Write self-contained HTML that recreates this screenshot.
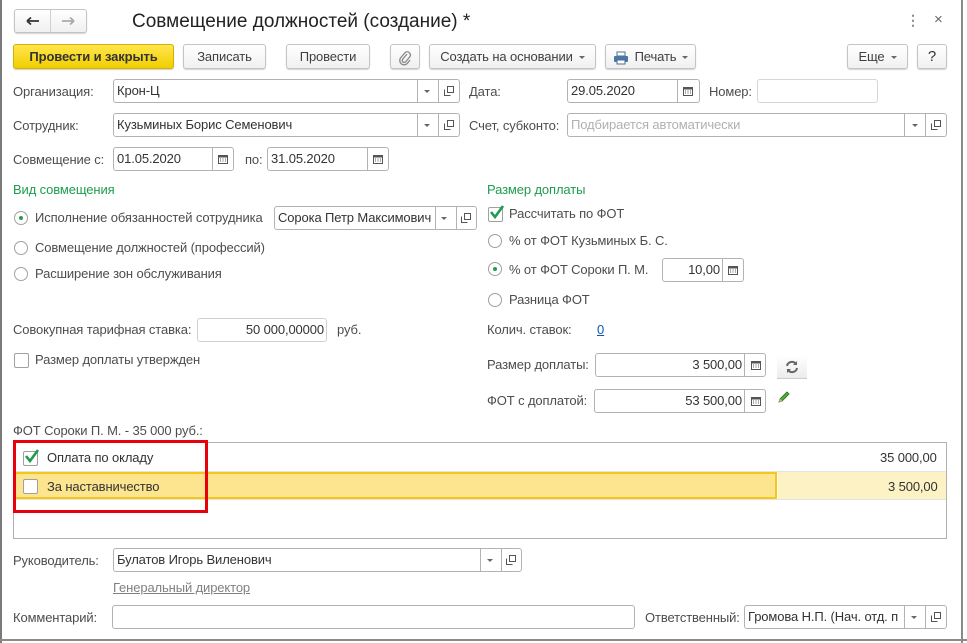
<!DOCTYPE html>
<html><head><meta charset="utf-8">
<style>
*{box-sizing:border-box;margin:0;padding:0}
body{width:967px;height:643px;background:#fff;font-family:"Liberation Sans",Arial,sans-serif;font-size:13px;letter-spacing:-0.12px;color:#4d4d4d;position:relative;overflow:hidden}
.a{position:absolute}
.t{position:absolute;line-height:16px;white-space:nowrap}
.v{color:#333}
.f{position:absolute;height:24px;border:1px solid #b3b3b3;border-radius:3px;background:#fff;line-height:22px;padding-left:3px;color:#333;white-space:nowrap;overflow:hidden}
.d{position:absolute;top:0;bottom:0;border-left:1px solid #b3b3b3}
.btn{position:absolute;height:25px;border:1px solid #c4c4c4;border-radius:3px;background:linear-gradient(#fff,#f0f0f0);box-shadow:0 1px 1px rgba(0,0,0,.18);text-align:center;line-height:23px;color:#404040;white-space:nowrap}
.arr{display:inline-block;width:0;height:0;border-left:3px solid transparent;border-right:3px solid transparent;border-top:3px solid #666;vertical-align:middle;margin-left:6px}
.rad{position:absolute;width:14px;height:14px;border:1px solid #a0a0a0;border-radius:50%;background:#fff}
.rad.on::after{content:"";position:absolute;left:4px;top:4px;width:4px;height:4px;border-radius:50%;background:#2b9a4a}
.cb{position:absolute;width:15px;height:15px;border:1px solid #a0a0a0;border-radius:2px;background:#fff}
.g{color:#1e9c4e}
</style></head><body>
<div class="a" style="left:0;top:0;width:2px;height:643px;background:#7a7a7a"></div>
<div class="a" style="left:961px;top:0;width:2px;height:643px;background:#8a8a8a"></div>
<div class="a" style="left:0;top:639px;width:967px;height:2px;background:#8a8a8a"></div>

<!-- nav -->
<div class="btn" style="left:14px;top:9px;width:73px;height:24px;line-height:20px"></div>
<div class="a" style="left:50px;top:10px;width:1px;height:22px;background:#d0d0d0"></div>
<svg class="a" style="left:26px;top:16px" width="14" height="10"><path d="M1 5H13M1 5L5 1.5M1 5L5 8.5" stroke="#333" stroke-width="1.8" fill="none"/></svg>
<svg class="a" style="left:61px;top:16px" width="14" height="10"><path d="M1 5H13M13 5L9 1.5M13 5L9 8.5" stroke="#aaa" stroke-width="1.8" fill="none"/></svg>
<div class="t" style="left:132px;top:11px;font-size:19px;line-height:22px;color:#222;letter-spacing:0">Совмещение должностей (создание) *</div>
<div class="t" style="left:906px;top:12px;color:#888;font-size:14px;font-weight:bold">⋮</div>
<div class="t" style="left:934px;top:12px;color:#666;font-size:15px">×</div>

<!-- toolbar -->
<div class="btn" style="left:13px;top:44px;width:161px;background:linear-gradient(#ffe64d,#f2cf00);border-color:#d4b300;color:#333;font-weight:bold">Провести и закрыть</div>
<div class="btn" style="left:183px;top:44px;width:83px">Записать</div>
<div class="btn" style="left:286px;top:44px;width:84px">Провести</div>
<div class="btn" style="left:390px;top:44px;width:30px"><svg width="14" height="16" style="vertical-align:middle"><path d="M9 4L4.5 9.5a2 2 0 0 0 3 2.5L12 6.5a3.2 3.2 0 0 0-4.8-4L2.5 8a4.4 4.4 0 0 0 6.5 5.8L12 10" stroke="#888" stroke-width="1.3" fill="none"/></svg></div>
<div class="btn" style="left:429px;top:44px;width:167px">Создать на основании<span class="arr"></span></div>
<div class="btn" style="left:605px;top:44px;width:91px"><svg width="16" height="14" style="vertical-align:middle;margin-right:6px"><rect x="4" y="1" width="8" height="4" fill="#fff" stroke="#4b6f96"/><rect x="1" y="5" width="14" height="6" rx="1" fill="#4b76a6"/><rect x="4" y="9" width="8" height="4" fill="#fff" stroke="#4b6f96"/></svg>Печать<span class="arr"></span></div>
<div class="btn" style="left:847px;top:44px;width:61px">Еще<span class="arr"></span></div>
<div class="btn" style="left:917px;top:44px;width:30px;font-size:15px;color:#333">?</div>

<!-- row 1 -->
<div class="t" style="left:13px;top:84px">Организация:</div>
<div class="f" style="left:113px;top:79px;width:347px">Крон-Ц<div class="d" style="left:303px"></div><div class="d" style="left:324px"></div></div>
<div class="t" style="left:469px;top:84px">Дата:</div>
<div class="f" style="left:567px;top:79px;width:133px">29.05.2020<div class="d" style="left:109px"></div></div>
<div class="t" style="left:709px;top:84px">Номер:</div>
<div class="f" style="left:757px;top:79px;width:121px;border-color:#d6d6d6"></div>

<!-- row 2 -->
<div class="t" style="left:13px;top:118px">Сотрудник:</div>
<div class="f" style="left:113px;top:113px;width:347px">Кузьминых Борис Семенович<div class="d" style="left:303px"></div><div class="d" style="left:324px"></div></div>
<div class="t" style="left:469px;top:118px">Счет, субконто:</div>
<div class="f" style="left:567px;top:113px;width:380px;color:#b0b0b0">Подбирается автоматически<div class="d" style="left:336px"></div><div class="d" style="left:357px"></div></div>

<!-- row 3 -->
<div class="t" style="left:13px;top:152px">Совмещение с:</div>
<div class="f" style="left:113px;top:147px;width:121px">01.05.2020<div class="d" style="left:98px"></div></div>
<div class="t" style="left:245px;top:152px">по:</div>
<div class="f" style="left:267px;top:147px;width:122px">31.05.2020<div class="d" style="left:99px"></div></div>

<!-- left group -->
<div class="t g" style="left:13px;top:182px">Вид совмещения</div>
<div class="rad on" style="left:14px;top:211px"></div>
<div class="t" style="left:35px;top:210px">Исполнение обязанностей сотрудника</div>
<div class="f" style="left:274px;top:206px;width:203px">Сорока Петр Максимович<div class="d" style="left:160px"></div><div class="d" style="left:181px"></div></div>
<div class="rad" style="left:14px;top:241px"></div>
<div class="t" style="left:35px;top:240px">Совмещение должностей (профессий)</div>
<div class="rad" style="left:14px;top:267px"></div>
<div class="t" style="left:35px;top:266px">Расширение зон обслуживания</div>

<div class="t" style="left:13px;top:322px">Совокупная тарифная ставка:</div>
<div class="f" style="left:197px;top:318px;width:130px;text-align:right;padding-right:2px;border-color:#d0d0d0">50 000,00000</div>
<div class="t" style="left:337px;top:322px">руб.</div>
<div class="cb" style="left:14px;top:353px"></div>
<div class="t" style="left:35px;top:352px">Размер доплаты утвержден</div>

<!-- right group -->
<div class="t g" style="left:487px;top:182px">Размер доплаты</div>
<div class="cb" style="left:488px;top:207px"></div>
<svg class="a" style="left:489px;top:204px" width="16" height="16"><path d="M2 8L6 13L14 2" stroke="#1e9c4e" stroke-width="2.6" fill="none"/></svg>
<div class="t" style="left:509px;top:206px">Рассчитать по ФОТ</div>
<div class="rad" style="left:488px;top:234px"></div>
<div class="t" style="left:509px;top:233px">% от ФОТ Кузьминых Б. С.</div>
<div class="rad on" style="left:488px;top:262px"></div>
<div class="t" style="left:509px;top:262px">% от ФОТ Сороки П. М.</div>
<div class="f" style="left:662px;top:258px;width:82px;text-align:right;padding-right:23px">10,00<div class="d" style="left:59px"></div></div>
<div class="rad" style="left:488px;top:293px"></div>
<div class="t" style="left:509px;top:292px">Разница ФОТ</div>
<div class="t" style="left:487px;top:322px">Колич. ставок:</div>
<div class="t" style="left:597px;top:322px;color:#0b56b8;text-decoration:underline">0</div>
<div class="t" style="left:487px;top:357px">Размер доплаты:</div>
<div class="f" style="left:595px;top:353px;width:171px;text-align:right;padding-right:23px">3 500,00<div class="d" style="left:148px"></div></div>
<div class="a" style="left:777px;top:355px;width:30px;height:24px;background:linear-gradient(#fff,#ececec);border-bottom:1px solid #ccc"></div>
<svg class="a" style="left:785px;top:360px" width="14" height="14"><path d="M2 6a5 5 0 0 1 9-2M12 8a5 5 0 0 1-9 2" stroke="#666" stroke-width="2" fill="none"/><path d="M12 1v4h-4zM2 13v-4h4z" fill="#666"/></svg>
<div class="t" style="left:487px;top:393px">ФОТ с доплатой:</div>
<div class="f" style="left:594px;top:389px;width:172px;text-align:right;padding-right:23px">53 500,00<div class="d" style="left:149px"></div></div>
<svg class="a" style="left:777px;top:390px" width="14" height="14"><path d="M2 12L3 9L10 2L12 4L5 11Z" fill="#4caf3a" stroke="#2a6a20" stroke-width=".8"/><path d="M2 12L3 9L5 11Z" fill="#e8c27a"/></svg>

<!-- table -->
<div class="t" style="left:13px;top:423px">ФОТ Сороки П. М. - 35 000 руб.:</div>
<div class="a" style="left:13px;top:442px;width:934px;height:97px;border:1px solid #b0b0b0;background:#fff"></div>
<div class="a" style="left:14px;top:471px;width:932px;height:1px;background:#e4e4e4"></div>
<div class="a" style="left:14px;top:472px;width:763px;height:27px;background:#fde58f;border:2px solid #f5c518"></div>
<div class="a" style="left:778px;top:472px;width:168px;height:27px;background:#fdf2c4"></div>
<div class="a" style="left:14px;top:499px;width:932px;height:1px;background:#e4e4e4"></div>
<div class="cb" style="left:23px;top:451px"></div>
<svg class="a" style="left:24px;top:448px" width="16" height="16"><path d="M2 8L6 13L14 2" stroke="#1e9c4e" stroke-width="2.6" fill="none"/></svg>
<div class="t v" style="left:47px;top:450px">Оплата по окладу</div>
<div class="t v" style="left:880px;top:450px">35 000,00</div>
<div class="cb" style="left:23px;top:479px"></div>
<div class="t v" style="left:47px;top:479px">За наставничество</div>
<div class="t v" style="left:888px;top:479px">3 500,00</div>
<div class="a" style="left:13px;top:440px;width:195px;height:73px;border:3px solid #e8000b"></div>

<!-- bottom -->
<div class="t" style="left:13px;top:553px">Руководитель:</div>
<div class="f" style="left:113px;top:548px;width:409px">Булатов Игорь Виленович<div class="d" style="left:366px"></div><div class="d" style="left:387px"></div></div>
<div class="t" style="left:113px;top:580px;color:#808080;text-decoration:underline">Генеральный директор</div>
<div class="t" style="left:13px;top:610px">Комментарий:</div>
<div class="f" style="left:112px;top:605px;width:523px"></div>
<div class="t" style="left:645px;top:610px">Ответственный:</div>
<div class="f" style="left:744px;top:605px;width:203px">Громова Н.П. (Нач. отд. п<div class="d" style="left:159px"></div><div class="d" style="left:180px"></div></div>

<!-- calendar/calc icons -->
<svg width="0" height="0" style="position:absolute"><defs><g id="cal"><rect x="0.5" y="1.5" width="9" height="8" fill="none" stroke="#555"/><rect x="0.5" y="1.5" width="9" height="2" fill="#555"/><path d="M2 5h1M4.5 5h1M7 5h1M2 7h1M4.5 7h1M7 7h1" stroke="#555"/></g><g id="dd"><path d="M0 0h6l-3 3z" fill="#666"/></g><g id="cp"><rect x="3.5" y="0.5" width="6" height="6" fill="#fff" stroke="#555"/><path d="M0.5 3.5v6h6" fill="none" stroke="#555"/></g></defs></svg>
<svg class="a" style="left:218px;top:154px" width="10" height="11"><use href="#cal"/></svg>
<svg class="a" style="left:373px;top:154px" width="10" height="11"><use href="#cal"/></svg>
<svg class="a" style="left:683px;top:86px" width="10" height="11"><use href="#cal"/></svg>
<svg class="a" style="left:728px;top:265px" width="10" height="11"><use href="#cal"/></svg>
<svg class="a" style="left:751px;top:360px" width="10" height="11"><use href="#cal"/></svg>
<svg class="a" style="left:751px;top:396px" width="10" height="11"><use href="#cal"/></svg>

<svg class="a" style="left:424px;top:90px" width="6" height="3"><use href="#dd"/></svg>
<svg class="a" style="left:444px;top:86px" width="10" height="10"><use href="#cp"/></svg>
<svg class="a" style="left:424px;top:124px" width="6" height="3"><use href="#dd"/></svg>
<svg class="a" style="left:444px;top:120px" width="10" height="10"><use href="#cp"/></svg>
<svg class="a" style="left:912px;top:124px" width="6" height="3"><use href="#dd"/></svg>
<svg class="a" style="left:931px;top:120px" width="10" height="10"><use href="#cp"/></svg>
<svg class="a" style="left:441px;top:217px" width="6" height="3"><use href="#dd"/></svg>
<svg class="a" style="left:461px;top:213px" width="10" height="10"><use href="#cp"/></svg>
<svg class="a" style="left:487px;top:559px" width="6" height="3"><use href="#dd"/></svg>
<svg class="a" style="left:506px;top:555px" width="10" height="10"><use href="#cp"/></svg>
<svg class="a" style="left:911px;top:616px" width="6" height="3"><use href="#dd"/></svg>
<svg class="a" style="left:931px;top:612px" width="10" height="10"><use href="#cp"/></svg>
</body></html>
